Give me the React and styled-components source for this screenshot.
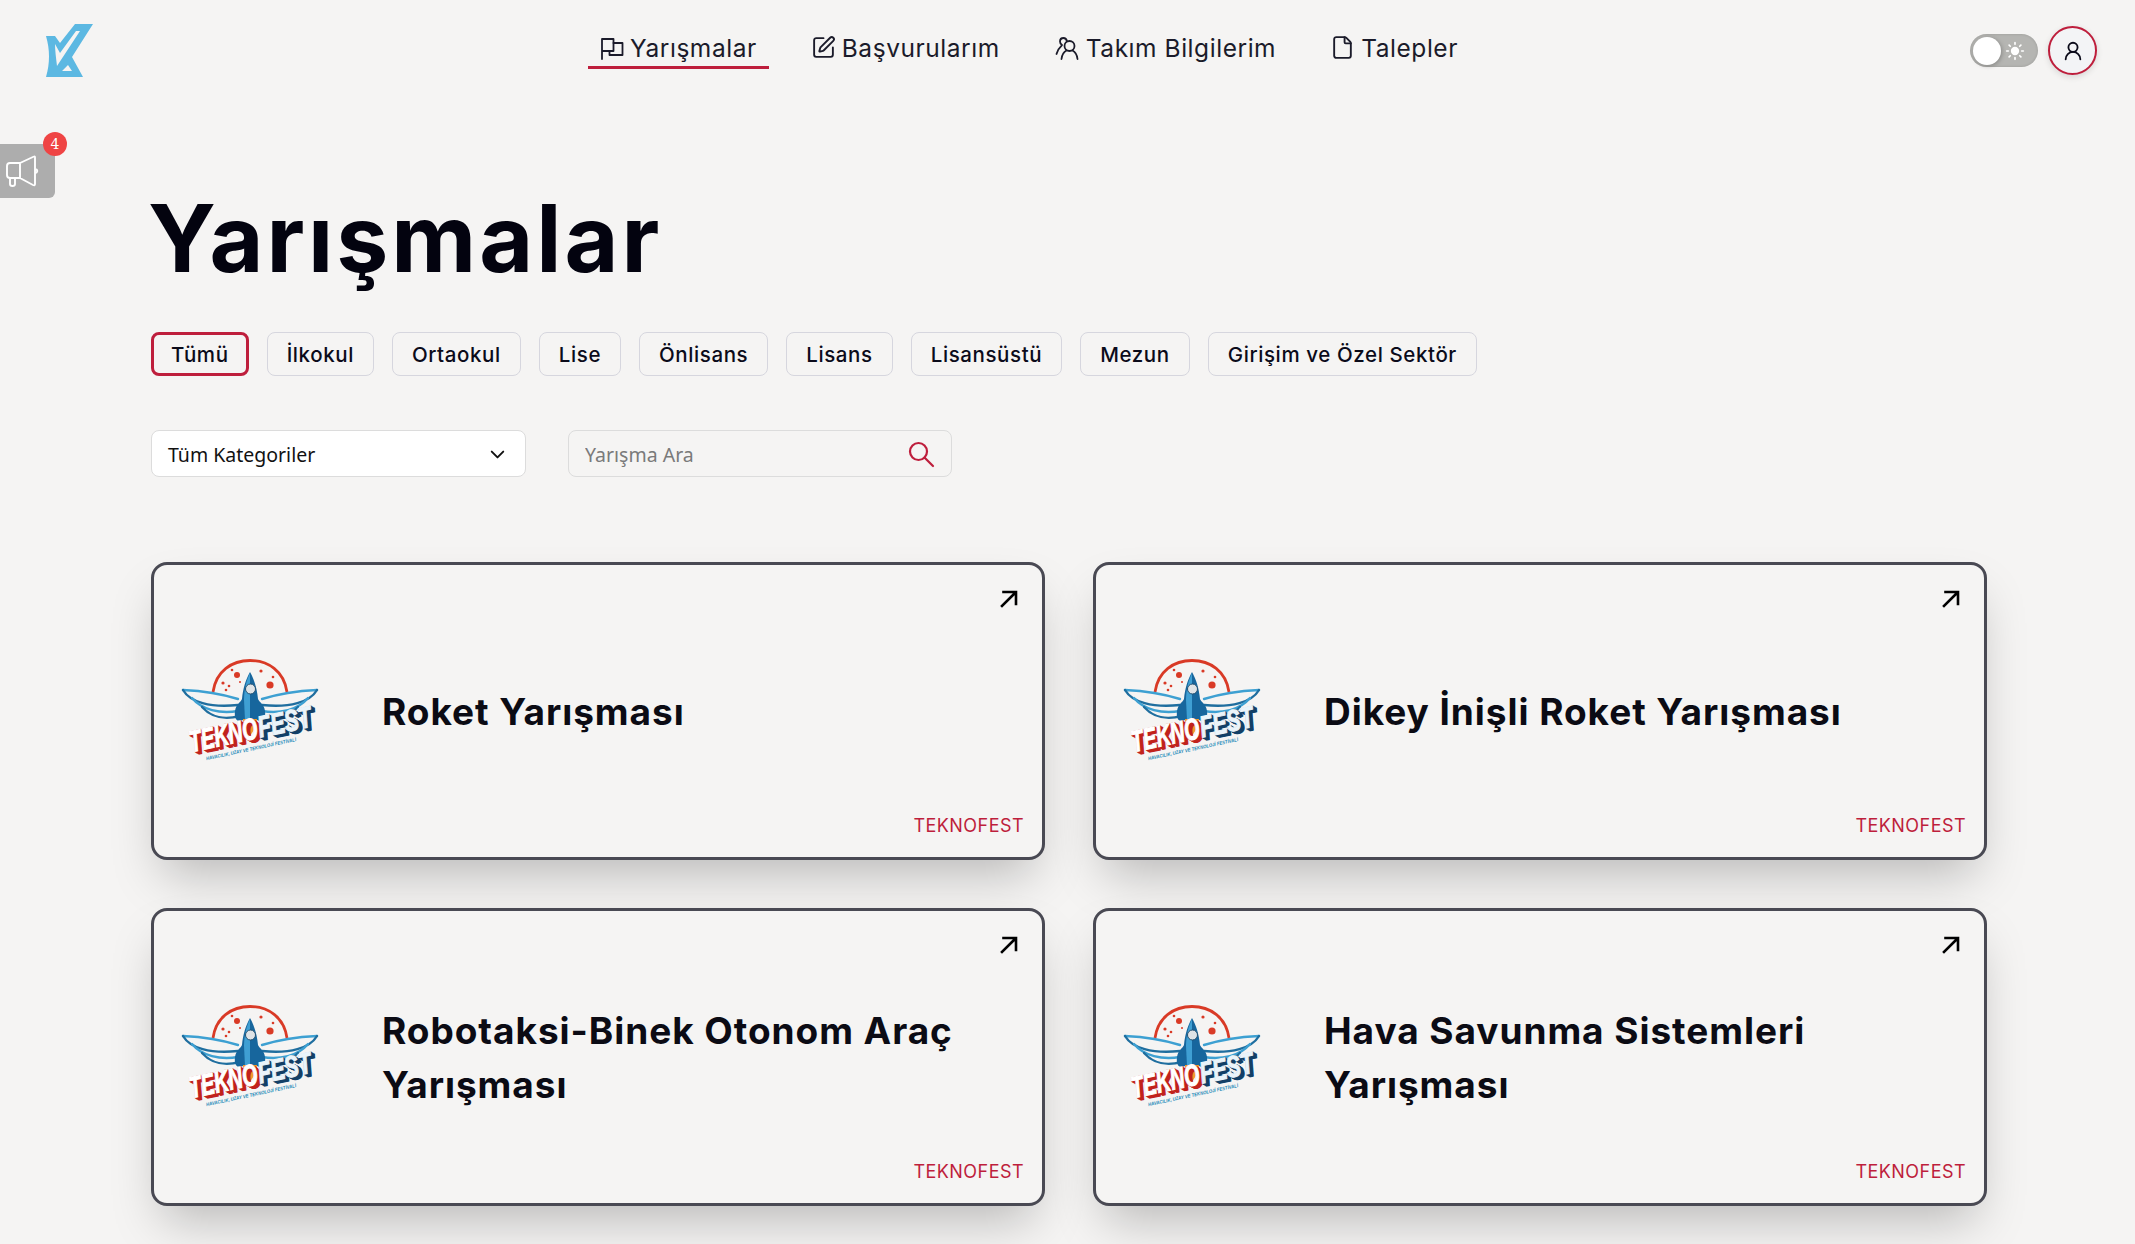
import React from "react";
import styled, { createGlobalStyle } from "styled-components";
import { SquarePen, File, ChevronDown, Sun, UserRound } from "lucide-react";

const Global = createGlobalStyle`
  html, body { margin: 0; padding: 0; background: #f5f4f3; }
  body { font-family: Inter, "Liberation Sans", sans-serif; color: #0b0b1a; }
  * { box-sizing: border-box; }
`;

const Page = styled.div`
  min-height: 1244px;
  background: #f5f4f3;
  overflow: hidden;
`;

const Header = styled.header`
  height: 96px;
  display: flex;
  align-items: flex-start;
  padding: 24px 38px 0 46px;
`;

const Logo = styled.svg`
  width: 47px;
  height: 53px;
  flex: none;
`;

const Nav = styled.nav`
  margin-left: 495px;
  margin-top: 6px;
  display: flex;
  gap: 30px;
`;

const NavLink = styled.a`
  height: 35px;
  padding: 0 12px 1px;
  display: flex;
  align-items: center;
  gap: 6px;
  font-size: 24.5px;
  font-weight: 400;
  letter-spacing: 0.55px;
  color: #1b1b2a;
  border-bottom: ${(p) => (p.$active ? "3px solid #be1e3c" : "3px solid transparent")};
  white-space: nowrap;
  box-sizing: content-box;
`;

const Actions = styled.div`
  margin-left: auto;
  display: flex;
  align-items: center;
  gap: 10px;
  margin-top: 2px;
`;

const Toggle = styled.div`
  width: 68px;
  height: 33px;
  border-radius: 17px;
  background: #b5b5b2;
  padding: 0 13px 0 3px;
  display: flex;
  align-items: center;
  justify-content: space-between;
  color: #fff;
  box-shadow: inset 0 0 3px rgba(0, 0, 0, 0.15);
`;

const Knob = styled.span`
  width: 28px;
  height: 28px;
  border-radius: 50%;
  background: #fff;
  box-shadow: 1px 1px 4px rgba(0, 0, 0, 0.25);
`;

const Avatar = styled.div`
  width: 49px;
  height: 49px;
  border-radius: 50%;
  background: #f3f4f6;
  border: 2px solid #be1e3c;
  display: flex;
  align-items: center;
  justify-content: center;
  color: #0b0b1a;
  box-shadow: 0 2px 6px rgba(0, 0, 0, 0.12);
`;

const SideTab = styled.div`
  position: fixed;
  left: 0;
  top: 144px;
  width: 55px;
  height: 54px;
  background: #adadad;
  border-radius: 0 6px 6px 0;
`;

const Badge = styled.span`
  position: absolute;
  left: 43px;
  top: -12px;
  width: 24px;
  height: 24px;
  border-radius: 50%;
  background: #ef4444;
  color: #fff;
  font: 14px/24px "DejaVu Serif", serif;
  text-align: center;
`;

const Main = styled.main`
  padding: 87px 148px 60px 151px;
`;

const Title = styled.h1`
  margin: 0 0 0 -3px;
  font-size: 93px;
  line-height: 110px;
  font-weight: 700;
  letter-spacing: 3px;
  color: #03030f;
`;

const Chips = styled.div`
  display: flex;
  gap: 18px;
  margin-top: 39px;
`;

const Chip = styled.button`
  height: 44px;
  border-radius: 8px;
  background: transparent;
  border: ${(p) => (p.$active ? "3px solid #be1e3c" : "1px solid #d6d6de")};
  padding: ${(p) => (p.$active ? "0 17px" : "0 19px")};
  font: 500 20.5px Inter, sans-serif;
  letter-spacing: 0.6px;
  color: #0b0b1a;
  white-space: nowrap;
`;

const Filters = styled.div`
  display: flex;
  gap: 42px;
  margin-top: 54px;
  align-items: flex-start;
`;

const SelectBox = styled.div`
  width: 375px;
  height: 47px;
  background: #fff;
  border: 1px solid #dcdcdc;
  border-radius: 8px;
  padding: 1px 16px 0;
  display: flex;
  align-items: center;
  justify-content: space-between;
  font: 400 19.5px "Noto Sans", sans-serif;
  color: #111;
`;

const SearchBox = styled.label`
  width: 384px;
  height: 47px;
  border: 1px solid #dcdcdc;
  border-radius: 8px;
  padding: 0 16px;
  display: flex;
  align-items: center;
  color: #be1e3c;
`;

const SearchInput = styled.input`
  flex: 1;
  min-width: 0;
  background: none;
  border: none;
  outline: none;
  padding: 1px 0 0;
  font: 400 19.5px "Noto Sans", sans-serif;
  &::placeholder { color: #7a7a7a; opacity: 1; }
`;

const Grid = styled.section`
  display: grid;
  grid-template-columns: 894px 894px;
  gap: 48px;
  margin-top: 85px;
`;

const Card = styled.article`
  height: 298px;
  border: 3px solid #494953;
  border-radius: 16px;
  background: #f5f4f3;
  box-shadow: 0 25px 50px -12px rgba(0, 0, 0, 0.25);
  display: grid;
  grid-template-rows: 1fr auto 1fr;
  padding: 20px 18px 20px 26px;
`;

const CardTop = styled.div`
  display: flex;
  justify-content: flex-end;
  padding: 5px 6px 0 0;
  color: #000;
`;

const CardBody = styled.div`
  display: flex;
  align-items: center;
  gap: 52px;
  padding-top: 2px;
`;

const CardTitle = styled.h2`
  margin: 0;
  font-size: 37px;
  line-height: 54px;
  font-weight: 700;
  letter-spacing: 0.95px;
  color: #0b0b14;
`;

const CardTag = styled.div`
  align-self: end;
  text-align: right;
  font-size: 18px;
  line-height: 22px;
  color: #be1e3c;
  letter-spacing: 0.45px;
`;

const LogoSvg = styled.svg`
  width: 150px;
  height: 120px;
  flex: none;
`;

const FlagIcon = () => (
  <svg width="24" height="26" viewBox="0 0 24 26" fill="none" stroke="currentColor" strokeWidth="1.8" strokeLinejoin="round" strokeLinecap="round">
    <path d="M2 24V4h11.500v12H2" />
    <path d="M13.500 8H22.500v12H9.500v-4" />
  </svg>
);

const UsersIcon = () => (
  <svg width="26" height="26" viewBox="0 0 26 26" fill="none" stroke="currentColor" strokeWidth="1.8" strokeLinecap="round" strokeLinejoin="round">
    <circle cx="15.500" cy="11" r="5" />
    <path d="M7.500 24c.5-4.500 3-7.500 5-8.500M23.500 24c-.5-4.500-3-7.500-5-8.500" />
    <path d="M13 6.200C12.500 4 11 3 9.500 3 7.500 3 6 4.500 6 6.500c0 1.700.9 2.800 2 3.600C6 12 3.500 15 2.500 19" />
  </svg>
);

const ArrowIcon = () => (
  <svg width="18" height="18" viewBox="0 0 18 18" fill="none" stroke="currentColor" strokeWidth="2.600" strokeLinecap="square">
    <path d="M2 16 15.500 2.500M3.500 2h12.500v12" />
  </svg>
);

const SearchIcon = () => (
  <svg width="28" height="28" viewBox="0 0 28 28" fill="none" stroke="currentColor" strokeWidth="2.200" strokeLinecap="round">
    <circle cx="11.500" cy="11.500" r="8.500" />
    <path d="M17.500 17.500 26 26" />
  </svg>
);

const Extruded = ({ x, sx, face, side, children }) => (
  <>
    {[3.4, 2.800, 2.200, 1.600, 1, 0.5].map((d) => (
      <text key={d} transform={`translate(${x + d} ${100 + d}) scale(${sx} 1)`} fill={side} stroke={side} strokeWidth="1.200">
        {children}
      </text>
    ))}
    <text transform={`translate(${x} 100) scale(${sx} 1)`} fill={face} stroke={face} strokeWidth="1">
      {children}
    </text>
  </>
);

const TeknofestLogo = () => (
  <LogoSvg viewBox="0 0 150 120" aria-hidden="true">
    <path d="M33 40C36 19 52 8.500 70 8.500S104 19 107 40" fill="none" stroke="#d93a26" strokeWidth="2.800" />
    <g fill="#d93a26">
      <circle cx="43" cy="31" r="1.600" /><circle cx="49" cy="34" r="1.300" /><circle cx="57" cy="23" r="3" />
      <circle cx="52" cy="18" r="1.300" /><circle cx="90" cy="33" r="3.600" /><circle cx="93" cy="25" r="1.300" />
      <circle cx="81" cy="19" r="1.600" /><circle cx="46" cy="38" r="1.300" /><circle cx="60" cy="30" r="1" />
    </g>
    <g fill="none" stroke="#3da0d2" strokeWidth="2.400" strokeLinecap="round" strokeLinejoin="round">
      <path d="M3 38C24 39 42 42 58 47" />
      <path d="M3 38C10 50 30 56 58 53" stroke="#1f6e9f" />
      <path d="M12 46C22 58 40 62 58 59" />
      <path d="M22 55C32 66 44 68 60 64" stroke="#1f6e9f" />
      <path d="M137 38C116 39 98 42 82 47" />
      <path d="M137 38C130 50 110 56 82 53" stroke="#1f6e9f" />
      <path d="M128 46C118 58 100 62 82 59" />
      <path d="M118 55C108 66 96 68 80 64" stroke="#1f6e9f" />
    </g>
    <path d="M63 68c-6 3-9-1-8-9 1-7 6-9 7-12 1-11 4-20 8-27 4 7 7 16 8 27 1 3 6 5 7 12 1 8-2 12-8 9Z" fill="#17669d" />
    <path d="M70 21c-3 6-6 16-6 27l1 20h5Z" fill="#3f9fd3" />
    <circle cx="70.500" cy="37" r="5" fill="#dfe3e6" stroke="#234f70" />
    <path d="M63 67c0 8 4 12 7 17 3-5 7-9 7-17Z" fill="#f29a2a" />
    <g transform="rotate(-12 12 98)" fontFamily="Liberation Sans, sans-serif" fontWeight="700" fontStyle="italic" fontSize="30">
      <Extruded x={11} sx={0.66} face="#fff" side="#c1221c">TEKNO</Extruded>
      <Extruded x={81} sx={0.71} face="#eaf4fa" side="#123f66">FEST</Extruded>
      <text transform="translate(24 111) scale(.86 1)" fill="#2288b8" fontSize="5" fontWeight="700">HAVACILIK, UZAY VE TEKNOLOJİ FESTİVALİ</text>
    </g>
  </LogoSvg>
);

const navItems = [
  { label: "Yarışmalar", icon: <FlagIcon />, active: true },
  { label: "Başvurularım", icon: <SquarePen size={25} strokeWidth={1.800} /> },
  { label: "Takım Bilgilerim", icon: <UsersIcon /> },
  { label: "Talepler", icon: <File size={25} strokeWidth={1.800} /> },
];
const chips = ["Tümü", "İlkokul", "Ortaokul", "Lise", "Önlisans", "Lisans", "Lisansüstü", "Mezun", "Girişim ve Özel Sektör"];
const cards = [
  ["Roket Yarışması"],
  ["Dikey İnişli Roket Yarışması"],
  ["Robotaksi-Binek Otonom Araç", "Yarışması"],
  ["Hava Savunma Sistemleri", "Yarışması"],
];

export default function App() {
  return (
    <Page>
      <Global />
      <Header>
        <Logo viewBox="46 24 47 53" aria-label="logo">
          <path
            fillRule="evenodd"
            fill="#5cb8e2"
            d="M46 36H55L60 43 75 24H93L72 57 83 77H46C50 63 50 50 46 36ZM76 31H80L57 66C56 58 55 50 55 44L60 53ZM68 65 72 71H62Z"
          />
        </Logo>
        <Nav>
          {navItems.map((n) => (
            <NavLink key={n.label} $active={n.active}>
              {n.icon}
              {n.label}
            </NavLink>
          ))}
        </Nav>
        <Actions>
          <Toggle>
            <Knob />
            <Sun size={20} strokeWidth={2} fill="#fff" />
          </Toggle>
          <Avatar>
            <UserRound size={22} strokeWidth={2} />
          </Avatar>
        </Actions>
      </Header>
      <SideTab>
        <Badge>4</Badge>
        <svg width="55" height="54" viewBox="0 0 55 54" fill="none" stroke="#fff" strokeWidth="1.900" strokeLinecap="round" strokeLinejoin="round">
          <path d="M20 19l14-6.500q1-.5 1 1.500v26q0 2-2 1L20 34H10q-3 0-3-3v-9q0-3 3-3ZM20 19v15M10 34v6q0 2 2.500 2T15 40v-5M36.500 25.500q1.500 1.500 0 3" />
        </svg>
      </SideTab>
      <Main>
        <Title>Yarışmalar</Title>
        <Chips>
          {chips.map((c, i) => (
            <Chip key={c} $active={i === 0}>{c}</Chip>
          ))}
        </Chips>
        <Filters>
          <SelectBox>
            Tüm Kategoriler
            <ChevronDown size={23} strokeWidth={2} />
          </SelectBox>
          <SearchBox>
            <SearchInput placeholder="Yarışma Ara" />
            <SearchIcon />
          </SearchBox>
        </Filters>
        <Grid>
          {cards.map((lines) => (
            <Card key={lines[0]}>
              <CardTop><ArrowIcon /></CardTop>
              <CardBody>
                <TeknofestLogo />
                <CardTitle>
                  {lines.map((l) => <div key={l}>{l}</div>)}
                </CardTitle>
              </CardBody>
              <CardTag>TEKNOFEST</CardTag>
            </Card>
          ))}
        </Grid>
      </Main>
    </Page>
  );
}
